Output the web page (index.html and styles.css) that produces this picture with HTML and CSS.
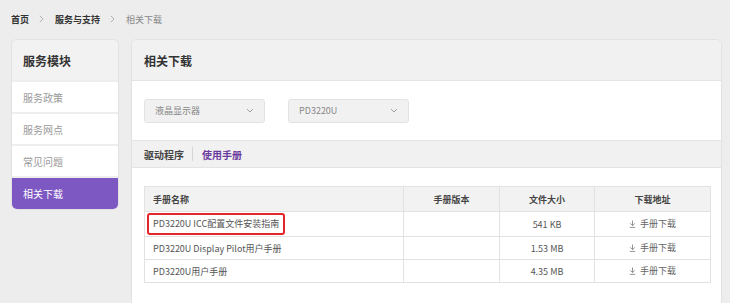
FILE: index.html
```html
<!DOCTYPE html>
<html lang="zh-CN">
<head>
<meta charset="utf-8">
<link rel="stylesheet" href="styles.css">
</head>
<body>
<div class="crumbs">
  <a class="crumb strong">首页</a>
  <svg class="sep" width="5" height="8" viewBox="0 0 5 8"><path d="M0.8 0.8l3.2 3.2-3.2 3.2" fill="none" stroke="#aaa" stroke-width="0.9"/></svg>
  <a class="crumb strong">服务与支持</a>
  <svg class="sep" width="5" height="8" viewBox="0 0 5 8"><path d="M0.8 0.8l3.2 3.2-3.2 3.2" fill="none" stroke="#aaa" stroke-width="0.9"/></svg>
  <span class="crumb current">相关下载</span>
</div>
<div class="layout">
  <aside class="side">
    <div class="side-head">服务模块</div>
    <div class="side-item">服务政策</div>
    <div class="side-item">服务网点</div>
    <div class="side-item">常见问题</div>
    <div class="side-item active">相关下载</div>
  </aside>
  <main class="panel">
    <div class="panel-head">相关下载</div>
    <div class="filters">
      <div class="select"><span>液晶显示器</span><svg class="caret" width="8" height="5" viewBox="0 0 8 5"><path d="M1 1l3 3 3-3" fill="none" stroke="#9a9a9a" stroke-width="0.9"/></svg></div>
      <div class="select"><span>PD3220U</span><svg class="caret" width="8" height="5" viewBox="0 0 8 5"><path d="M1 1l3 3 3-3" fill="none" stroke="#9a9a9a" stroke-width="0.9"/></svg></div>
    </div>
    <div class="tabs">
      <span class="tab">驱动程序</span>
      <span class="tab-sep"></span>
      <span class="tab on">使用手册</span>
    </div>
    <div class="body">
      <table class="grid">
        <colgroup><col class="c1"><col class="c2"><col class="c3"><col class="c4"></colgroup>
        <thead>
          <tr><th class="left">手册名称</th><th>手册版本</th><th>文件大小</th><th>下载地址</th></tr>
        </thead>
        <tbody>
          <tr><td class="left"><span class="mark">PD3220U ICC配置文件安装指南</span></td><td></td><td>541 KB</td><td><span class="dl"><svg width="7" height="8" viewBox="0 0 7 8"><path d="M3.5 0.5v5M1.3 3.4l2.2 2.2 2.2-2.2M0.8 7.4h5.4" fill="none" stroke="#888" stroke-width="0.9"/></svg>手册下载</span></td></tr>
          <tr><td class="left">PD3220U Display Pilot用户手册</td><td></td><td>1.53 MB</td><td><span class="dl"><svg width="7" height="8" viewBox="0 0 7 8"><path d="M3.5 0.5v5M1.3 3.4l2.2 2.2 2.2-2.2M0.8 7.4h5.4" fill="none" stroke="#888" stroke-width="0.9"/></svg>手册下载</span></td></tr>
          <tr><td class="left">PD3220U用户手册</td><td></td><td>4.35 MB</td><td><span class="dl"><svg width="7" height="8" viewBox="0 0 7 8"><path d="M3.5 0.5v5M1.3 3.4l2.2 2.2 2.2-2.2M0.8 7.4h5.4" fill="none" stroke="#888" stroke-width="0.9"/></svg>手册下载</span></td></tr>
        </tbody>
      </table>
    </div>
  </main>
</div>
</body>
</html>
```
FILE: styles.css
```css
* { box-sizing: border-box; }
html, body { height: 100%; }
body {
  margin: 0;
  background: #ededed;
  font-family: "Noto Sans CJK SC", "Noto Sans", sans-serif;
  color: #555;
  padding: 0 8px 0 11px;
  overflow: hidden;
}
.crumbs {
  height: 39px;
  display: flex;
  align-items: center;
  font-size: 9px;
  padding-bottom: 1px;
}
.crumb.strong { font-weight: bold; color: #333; }
.crumb.current { color: #888; }
.sep { margin: 0 11px 0 10px; }
.layout {
  display: flex;
  align-items: flex-start;
  gap: 12px;
}
.side {
  width: 108px;
  border: 1px solid #e2e2e2;
  border-radius: 6px;
  overflow: hidden;
  background: #eeeeee;
  display: flex;
  flex-direction: column;
  gap: 2px;
}
.side-head {
  height: 40px;
  background: #f2f2f2;
  display: flex;
  align-items: center;
  padding-left: 11px;
  font-size: 12px;
  font-weight: bold;
  color: #333;
}
.side-item {
  height: 30px;
  background: #fff;
  display: flex;
  align-items: center;
  padding-left: 11px;
  font-size: 10px;
  color: #999;
}
.side-item.active {
  background: #7e58c2;
  color: #fff;
  height: 31px;
}
.panel {
  flex: 1;
  height: 264px;
  border: 1px solid #e2e2e2;
  border-bottom: none;
  border-radius: 6px 6px 0 0;
  background: #fff;
  overflow: hidden;
}
.panel-head {
  height: 41px;
  background: #f1f1f1;
  border-bottom: 1px solid #e4e4e4;
  display: flex;
  align-items: center;
  padding-left: 12px;
  font-size: 12px;
  font-weight: bold;
  color: #333;
}
.filters {
  height: 60px;
  display: flex;
  align-items: center;
  gap: 23px;
  padding: 0 12px;
  border-bottom: 1px solid #e4e4e4;
}
.select {
  width: 121px;
  height: 24px;
  background: #f1f1f1;
  border: 1px solid #e3e3e3;
  border-radius: 3px;
  display: flex;
  align-items: center;
  justify-content: space-between;
  padding: 0 10px 0 10px;
  font-size: 9px;
  color: #888;
}
.tabs {
  height: 27px;
  background: #f1f1f1;
  border-bottom: 1px solid #e4e4e4;
  display: flex;
  align-items: center;
  padding-left: 12px;
  font-size: 10px;
}
.tab { color: #444; font-weight: bold; }
.tab.on { color: #6a3a9e; }
.tab-sep {
  width: 1px;
  height: 14px;
  background: #d6d6d6;
  margin: 0 9px 0 8px;
}
.body { padding: 18px 11px 0 12px; }
.grid {
  width: 566px;
  border-collapse: collapse;
  table-layout: fixed;
  font-size: 9px;
  color: #555;
}
.grid .c1 { width: 259px; }
.grid .c2 { width: 96px; }
.grid .c3 { width: 95px; }
.grid .c4 { width: 116px; }
.grid th, .grid td {
  border: 1px solid #e2e2e2;
  text-align: center;
  font-weight: normal;
}
.grid th {
  height: 25px;
  background: #f2f2f2;
  font-weight: bold;
  color: #444;
}
.grid td { height: 23px; }
.grid .left { text-align: left; padding-left: 8px; }
.mark {
  display: inline-block;
  border: 2px solid #e3262a;
  border-radius: 3px;
  padding: 3px 4px 3px 4px;
  margin-left: -6px;
  line-height: 12px;
}
.dl { display: inline-flex; align-items: center; gap: 4px; color: #666; }
```
